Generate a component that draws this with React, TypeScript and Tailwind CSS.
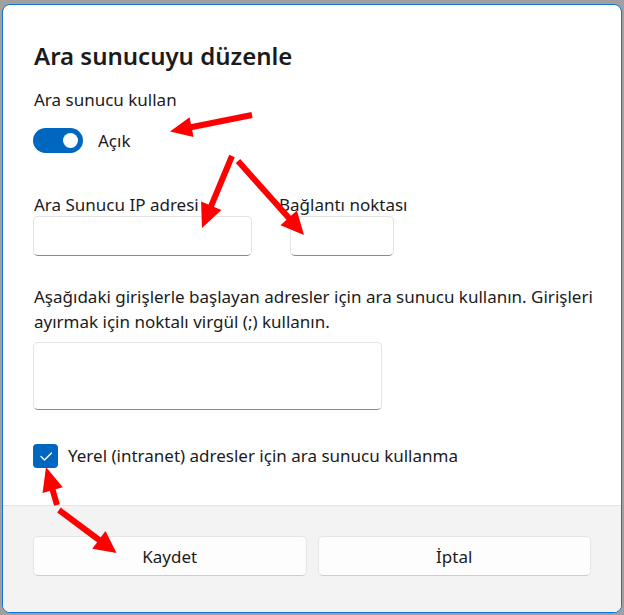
import React from "react";

type Pt = [number, number];

function Arrow({ tail, tip, hl, hw, sw = 6 }: { tail: Pt; tip: Pt; hl: number; hw: number; sw?: number }) {
  const dx = tip[0] - tail[0];
  const dy = tip[1] - tail[1];
  const len = Math.hypot(dx, dy);
  const ux = dx / len;
  const uy = dy / len;
  const bx = tip[0] - ux * hl;
  const by = tip[1] - uy * hl;
  const px = -uy;
  const py = ux;
  const pts = `${tip[0]},${tip[1]} ${bx + px * hw},${by + py * hw} ${bx - px * hw},${by - py * hw}`;
  return (
    <g>
      <line x1={tail[0]} y1={tail[1]} x2={bx + ux * 2} y2={by + uy * 2} stroke="#ff0000" strokeWidth={sw} />
      <polygon points={pts} fill="#ff0000" />
    </g>
  );
}

export default function App() {
  const font = { fontFamily: '"Noto Sans", "Open Sans", sans-serif' };
  return (
    <div className="relative w-[624px] h-[615px] bg-[#a0a0a0] pt-[4px] pl-[2px] overflow-hidden" style={font}>
      <div className="w-[620px] h-[609px] border border-[#1273d4] rounded-[8px] bg-white overflow-hidden flex flex-col text-[#1b1b1b]">
        <div className="px-[30px] pt-[35px]">
          <div className="h-[32px] leading-[32px] text-[24px] font-semibold pl-[1px]">Ara sunucuyu düzenle</div>
          <div className="mt-[16px] h-[24px] leading-[24px] text-[17px] pl-[1px]">Ara sunucu kullan</div>
          <div className="mt-[16px] h-[25px] flex items-center">
            <div className="w-[50px] h-[25px] rounded-full bg-[#0067c0] flex items-center justify-end pr-[5px]">
              <div className="w-[15px] h-[15px] rounded-full bg-white" />
            </div>
            <span className="ml-[15px] text-[17px] leading-[24px]">Açık</span>
          </div>
          <div className="mt-[41px] flex">
            <div className="w-[219px] flex flex-col">
              <div className="h-[22px] leading-[22px] text-[17px] pl-[1px] whitespace-nowrap">Ara Sunucu IP adresi</div>
              <div className="h-[40px] rounded-[5px] border border-[#e3e3e3] border-b-[#8a8a8a] bg-white" />
            </div>
            <div className="ml-[38px] w-[104px] flex flex-col">
              <div className="h-[22px] leading-[22px] text-[17px] -ml-[11px] whitespace-nowrap">Bağlantı noktası</div>
              <div className="h-[40px] rounded-[5px] border border-[#e3e3e3] border-b-[#8a8a8a] bg-white" />
            </div>
          </div>
          <div className="mt-[28px] text-[17px] leading-[25px] pl-[1px] whitespace-nowrap">
            Aşağıdaki girişlerle başlayan adresler için ara sunucu kullanın. Girişleri
            <br />
            ayırmak için noktalı virgül (;) kullanın.
          </div>
          <div className="mt-[8px] w-[349px] h-[68px] rounded-[5px] border border-[#e3e3e3] border-b-[#8a8a8a] bg-white" />
          <div className="mt-[34px] h-[24px] flex items-center">
            <div className="w-[25px] h-[24px] rounded-[4px] bg-[#0067c0] flex items-center justify-center">
              <svg width="24" height="24" viewBox="0 0 24 24">
                <polyline points="7,12.5 10.5,16 17.5,9" fill="none" stroke="#ffffff" strokeWidth="1.4" strokeLinecap="round" strokeLinejoin="round" />
              </svg>
            </div>
            <span className="ml-[10px] text-[17px] leading-[24px] whitespace-nowrap">Yerel (intranet) adresler için ara sunucu kullanma</span>
          </div>
        </div>
        <div className="mt-auto h-[107px] bg-[#f3f3f3] border-t border-[#e5e5e5] px-[30px] pt-[30px]">
          <div className="grid grid-cols-2 gap-[11px]">
            <div className="h-[40px] rounded-[5px] bg-[#fdfdfd] border border-[#e5e5e5] border-b-[#cccccc] flex items-center justify-center text-[17px] pt-[1px]">Kaydet</div>
            <div className="h-[40px] rounded-[5px] bg-[#fdfdfd] border border-[#e5e5e5] border-b-[#cccccc] flex items-center justify-center text-[17px] pt-[1px]">İptal</div>
          </div>
        </div>
      </div>
      <svg className="absolute inset-0 pointer-events-none" width="624" height="615" viewBox="0 0 624 615">
        <Arrow tail={[252, 115]} tip={[170, 131.5]} hl={22} hw={10} />
        <Arrow tail={[232, 156]} tip={[202, 228]} hl={24} hw={11} />
        <Arrow tail={[238, 161]} tip={[304, 235]} hl={23} hw={11} />
        <Arrow tail={[57, 505]} tip={[46, 467]} hl={24} hw={10.5} />
        <Arrow tail={[59, 510]} tip={[116.5, 553]} hl={22} hw={11} />
      </svg>
    </div>
  );
}
